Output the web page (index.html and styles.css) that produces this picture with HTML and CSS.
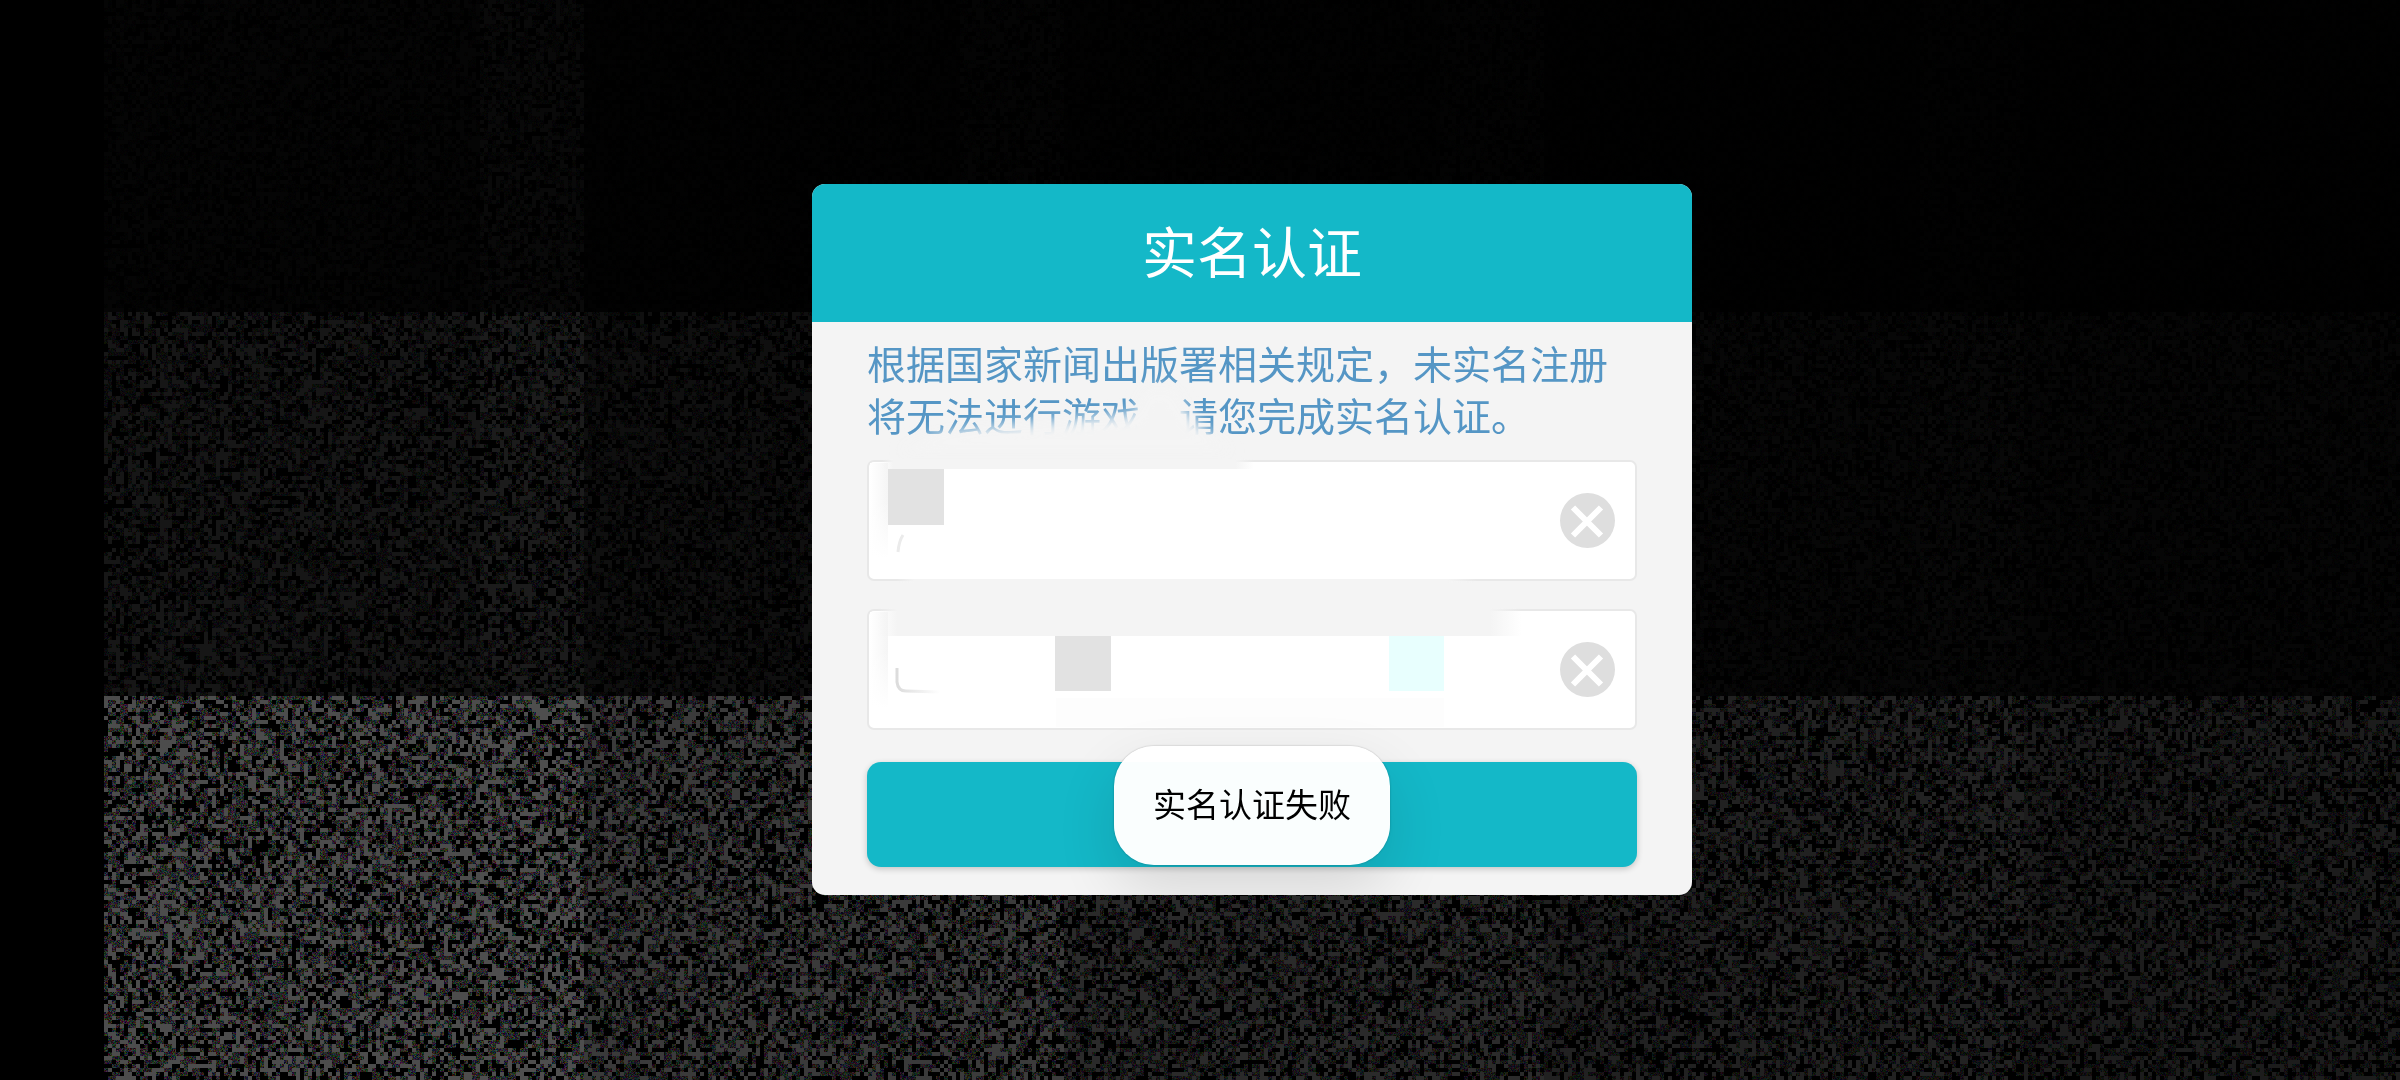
FILE: index.html
```html
<!DOCTYPE html>
<html lang="zh-CN">
<head>
  <meta charset="UTF-8" />
  <meta name="viewport" content="width=device-width, initial-scale=1" />
  <title>实名认证</title>
  <link rel="stylesheet" href="styles.css">
</head>
<body>

<canvas id="noise" class="noise" aria-hidden="true"></canvas>

<main class="stage">
  <form class="card">
    <h1 class="card-title">实名认证</h1>

    <div class="card-body">
      <p class="notice">根据国家新闻出版署相关规定，未实名注册将无法进行游戏，请您完成实名认证。</p>

      <div class="fields">
        <div class="field">
          <input type="text" name="name" aria-label="姓名" />
          <button type="button" class="clear" aria-label="清除姓名">
            <svg viewBox="0 0 55 55"><circle cx="27.5" cy="27.5" r="27.5"/><path d="M13 14.5 41 42.5M41 14.5 13 42.5"/></svg>
          </button>
        </div>
        <div class="field">
          <input type="text" name="idcard" aria-label="身份证号" />
          <button type="button" class="clear" aria-label="清除身份证号">
            <svg viewBox="0 0 55 55"><circle cx="27.5" cy="27.5" r="27.5"/><path d="M13 14.5 41 42.5M41 14.5 13 42.5"/></svg>
          </button>
        </div>
      </div>

      <button type="submit" class="submit" aria-label="提交"></button>

      <!-- smudges over the private data -->
      <svg class="smudge" viewBox="0 0 880 573" aria-hidden="true">
        <defs>
          <filter id="soft" x="-10%" y="-30%" width="120%" height="160%"><feGaussianBlur stdDeviation="7"/></filter>
          <linearGradient id="side" x1="0" x2="1"><stop offset="0" stop-color="#fff"/><stop offset="1" stop-color="#f5f5f5"/></linearGradient>
          <linearGradient id="down" x1="0" x2="0" y1="0" y2="1"><stop offset="0.4" stop-color="#fff" stop-opacity="0"/><stop offset="1" stop-color="#fff"/></linearGradient>
          <linearGradient id="edge" x1="0" x2="1"><stop offset="0" stop-color="#f4f4f4" stop-opacity="0"/><stop offset="0.03" stop-color="#f4f4f4"/><stop offset="0.95" stop-color="#f4f4f4"/><stop offset="1" stop-color="#f4f4f4" stop-opacity="0"/></linearGradient>
          <linearGradient id="hook" x1="0" x2="1"><stop offset="0" stop-color="#dcdcdc"/><stop offset="1" stop-color="#fff"/></linearGradient>
        </defs>

        <path class="paper" filter="url(#soft)" d="M90 126 125 112 165 106 220 101 270 96 322 92 334 66H362L374 88 396 110 420 130H90Z"/>

        <path fill="url(#side)" d="M58 141H76V236H58Z"/>
        <path fill="url(#down)" d="M57 141H77V236H57Z"/>
        <path fill="url(#edge)" d="M70 137H442V147H70Z"/>
        <path class="grey" d="M76 147H132V203H76Z"/>
        <path class="tick" d="M86 230Q87 219 91 213"/>
        <path fill="url(#edge)" d="M85 257H665V261H85Z"/>

        <path fill="url(#side)" d="M58 290H76V386H58Z"/>
        <path fill="url(#down)" d="M57 290H77V386H57Z"/>
        <path fill="url(#edge)" d="M66 286H710V314H66Z"/>
        <path class="grey" d="M243 314H299V369H243Z"/>
        <path class="cyan" d="M577 314H632V369H577Z"/>
        <path fill="none" stroke="url(#hook)" stroke-width="3" d="M85 346V360Q86 369 94 369L128 370"/>
        <path class="shade" d="M244 376H632V405H244Z"/>
      </svg>

      <div class="toast" role="alert">实名认证失败</div>
    </div>
  </form>
</main>

<script src="noise.js"></script>

</body>
</html>
```
FILE: styles.css
```css
* {
  box-sizing: border-box;
}

body {
  margin: 0;
  min-height: 100vh;
  background: #000;
  font-family: "Noto Sans CJK SC", sans-serif;
}

.noise {
  position: fixed;
  top: 0;
  left: 104px;
}

.stage {
  position: relative;
  display: flex;
  align-items: center;
  justify-content: center;
  min-height: 100vh;
  padding: 0 0 2px 104px;
}

.card {
  width: 100%;
  max-width: 880px;
  border-radius: 13px;
  background: #f4f4f4;
  overflow: hidden;
}

.card-title {
  margin: 0;
  padding: 25px 0 33px;
  background: #14b8c8;
  color: #fff;
  font-size: 55px;
  font-weight: 400;
  line-height: 80px;
  text-align: center;
}

.card-body {
  position: relative;
  padding: 14px 55px 28px;
}

.notice {
  margin: 0 0 20px;
  color: #5596c5;
  font-size: 39px;
  line-height: 52px;
}

.fields {
  display: flex;
  flex-direction: column;
  gap: 28px;
}

.field {
  display: flex;
  align-items: center;
  padding: 0 20px;
  border: 2px solid #e8e8e8;
  border-radius: 7px;
  background: #fff;
}

.field input {
  flex: 1;
  min-width: 0;
  height: 117px;
  padding: 0;
  border: none;
  outline: none;
  background: none;
  font-family: inherit;
  font-size: 39px;
}

.clear {
  width: 55px;
  height: 55px;
  padding: 0;
  border: none;
  background: none;
  cursor: pointer;
}

.clear svg {
  display: block;
}

.clear circle {
  fill: #dedede;
}

.clear path {
  fill: none;
  stroke: #fff;
  stroke-width: 6;
}

.submit {
  display: block;
  width: 100%;
  height: 105px;
  margin-top: 32px;
  border: none;
  border-radius: 14px;
  background: #14b8c8;
  box-shadow: 0 2px 6px rgba(0, 0, 0, 0.2);
  cursor: pointer;
}

.smudge {
  position: absolute;
  top: 0;
  left: 0;
  width: 100%;
  pointer-events: none;
}

.smudge .paper {
  fill: #f4f4f4;
}

.smudge .grey {
  fill: #e2e2e2;
}

.smudge .cyan {
  fill: #e8fffe;
}

.smudge .shade {
  fill: #fdfdfd;
}

.smudge .tick {
  fill: none;
  stroke: #ebebeb;
  stroke-width: 3;
}

.toast {
  position: absolute;
  bottom: 30px;
  left: 50%;
  transform: translateX(-50%);
  padding: 33px 39px 38px;
  border-radius: 40px;
  background: rgba(255, 255, 255, 0.98);
  box-shadow: 0 0 2px rgba(0, 0, 0, 0.3), 0 24px 60px rgba(0, 0, 0, 0.12);
  color: #000;
  font-size: 33px;
  line-height: 48px;
  white-space: nowrap;
}
```
FILE: noise.js
```js
const canvas = document.getElementById("noise");
const ctx = canvas.getContext("2d");

const CELL = 4;
const TILE = 480;
// brightest grey of each tile, one list per horizontal band
const bands = [
  { end: 312, max: [5, 2, 2, 1, 1], strip: 4 },
  { end: 696, max: [22, 15, 10, 7, 6], strip: 5 },
  { end: Infinity, max: [76, 58, 42, 33, 28], strip: 2 }
];

let seed = 7;
function random() {
  seed = (seed * 1664525 + 1013904223) % 4294967296;
  return seed / 4294967296;
}

function draw() {
  canvas.width = Math.max(1, window.innerWidth - 104);
  canvas.height = window.innerHeight;
  const image = ctx.createImageData(canvas.width, canvas.height);

  for (let y = 0; y < canvas.height; y += CELL) {
    const band = bands.find(b => y < b.end);
    for (let x = 0; x < canvas.width; x += CELL) {
      const tile = Math.min(Math.floor(x / TILE), 4);
      let max = band.max[tile];
      if (x % TILE >= 376) max += band.strip / (tile + 1);
      const kind = random();
      for (let j = y; j < Math.min(y + CELL, canvas.height); j++) {
        for (let i = x; i < Math.min(x + CELL, canvas.width); i++) {
          const p = (j * canvas.width + i) * 4;
          for (let c = 0; c < 3; c++) {
            // a cell is lit, dark or filled with fine grain
            let v = max;
            if (kind > 0.58) v = max * random();
            else if (kind > 0.28) v = 0;
            image.data[p + c] = v;
          }
          image.data[p + 3] = 255;
        }
      }
    }
  }
  ctx.putImageData(image, 0, 0);
}

draw();
window.addEventListener("resize", draw);
```
